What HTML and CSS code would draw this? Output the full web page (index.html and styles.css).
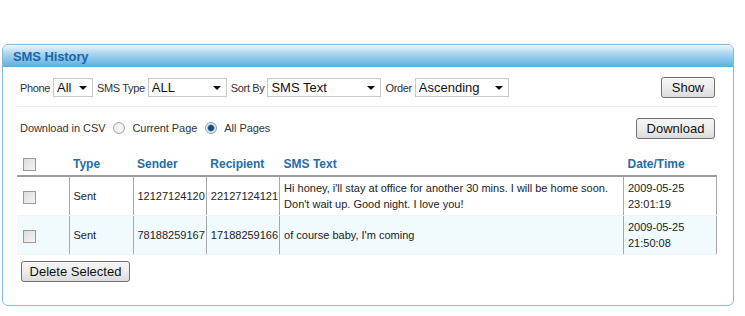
FILE: index.html
```html
<!DOCTYPE html>
<html lang="en">
<head>
<meta charset="utf-8">
<title>SMS History</title>
<link rel="stylesheet" href="styles.css">
</head>
<body>
<div class="panel">
  <div class="panel-head">SMS History</div>
  <div class="panel-body">
    <form class="filters">
      <label class="lbl">Phone</label>
      <span class="sel sel-phone"><select><option>All</option></select></span>
      <label class="lbl">SMS Type</label>
      <span class="sel sel-type"><select><option>ALL</option></select></span>
      <label class="lbl">Sort By</label>
      <span class="sel sel-sort"><select><option>SMS Text</option></select></span>
      <label class="lbl">Order</label>
      <span class="sel sel-order"><select><option>Ascending</option></select></span>
      <button type="button" class="btn btn-push">Show</button>
    </form>
    <div class="csv">
      <span class="lbl">Download in CSV</span>
      <span class="radio"></span>
      <span class="lbl">Current Page</span>
      <span class="radio on"></span>
      <span class="lbl">All Pages</span>
      <button type="button" class="btn btn-push">Download</button>
    </div>
    <table class="grid">
      <thead>
        <tr>
          <th class="c-cb"><span class="cb"></span></th>
          <th class="c-type">Type</th>
          <th class="c-num">Sender</th>
          <th class="c-num">Recipient</th>
          <th class="c-text">SMS Text</th>
          <th class="c-date">Date/Time</th>
        </tr>
      </thead>
      <tbody>
        <tr>
          <td class="c-cb"><span class="cb"></span></td>
          <td>Sent</td>
          <td>12127124120</td>
          <td>22127124121</td>
          <td>Hi honey, i'll stay at office for another 30 mins. I will be home soon. Don't wait up. Good night. I love you!</td>
          <td>2009-05-25<br>23:01:19</td>
        </tr>
        <tr class="alt">
          <td class="c-cb"><span class="cb"></span></td>
          <td>Sent</td>
          <td>78188259167</td>
          <td>17188259166</td>
          <td>of course baby, I'm coming</td>
          <td>2009-05-25<br>21:50:08</td>
        </tr>
      </tbody>
    </table>
    <button type="button" class="btn btn-delete">Delete Selected</button>
  </div>
</div>
</body>
</html>
```

FILE: styles.css
```css
* {
  box-sizing: border-box;
}
body {
  margin: 0;
  background: #fff;
  font-family: "Liberation Sans", Arial, sans-serif;
  font-size: 11px;
  color: #222;
}
.panel {
  margin: 44px 0 0 2px;
  width: 732px;
  height: 262px;
  border: 1px solid #86b9d8;
  border-radius: 6px;
  overflow: hidden;
}
.panel-head {
  height: 22px;
  padding: 4px 0 0 10px;
  background: linear-gradient(to bottom, #eef6fc 0%, #a9d4ef 40%, #5aaee0 100%);
  font-size: 13px;
  font-weight: bold;
  color: #1b67a8;
  letter-spacing: -0.1px;
}
.panel-body {
  padding: 0 15px 0 14px;
}
.filters {
  display: flex;
  align-items: center;
  height: 40px;
  padding: 2px 0 0 3px;
  margin: 0;
  border-bottom: 1px solid #ececec;
}
.lbl {
  color: #333;
  margin-right: 3px;
  letter-spacing: -0.35px;
}
.sel {
  position: relative;
  display: inline-block;
  height: 19px;
  margin-right: 4px;
}
.sel select {
  appearance: none;
  -webkit-appearance: none;
  width: 100%;
  height: 19px;
  padding: 0 0 0 3px;
  border: 1px solid #c9c9c9;
  background: #fff;
  font-family: "Liberation Sans", Arial, sans-serif;
  font-size: 13px;
  color: #111;
}
.sel::after {
  content: "";
  position: absolute;
  right: 6px;
  top: 8px;
  border-left: 4px solid transparent;
  border-right: 4px solid transparent;
  border-top: 4px solid #111;
  pointer-events: none;
}
.sel-phone { width: 40px; }
.sel-type { width: 79px; }
.sel-sort { width: 114px; }
.sel-order { width: 94px; }
.btn {
  height: 21px;
  padding: 0 6px;
  border: 1px solid #707070;
  border-radius: 3px;
  background: linear-gradient(to bottom, #f6f6f6 0%, #ececec 50%, #dcdcdc 100%);
  font-family: "Liberation Sans", Arial, sans-serif;
  font-size: 13px;
  color: #111;
  white-space: nowrap;
}
.btn-push {
  margin-left: auto;
  margin-right: 3px;
}
.filters .btn { width: 54px; }
.csv {
  display: flex;
  align-items: center;
  height: 44px;
  padding: 0 0 2px 3px;
}
.csv .btn { width: 79px; }
.csv .lbl {
  margin-right: 8px;
  letter-spacing: -0.05px;
}
.radio {
  display: inline-block;
  width: 12px;
  height: 12px;
  margin-right: 7px;
  border-radius: 50%;
  border: 1px solid #9aa4ab;
  background: radial-gradient(circle, #fdfdfd 0%, #e3e6e8 100%);
}
.radio.on {
  background: radial-gradient(circle, #1a4d75 0 2.5px, #4a8fc0 3px, #e7eef3 4px, #dfe3e6 100%);
}
.grid {
  width: 700px;
  border-collapse: collapse;
  margin: 0 0 6px 0;
}
.grid th {
  height: 25px;
  padding: 1px 0 0 4px;
  text-align: left;
  font-size: 12px;
  font-weight: bold;
  color: #1f6ea6;
  vertical-align: middle;
  border-bottom: 2px solid #9c9c9c;
}
.grid td {
  height: 39px;
  padding: 1px 1px 0 4px;
  border: 1px solid #a8a8a8;
  border-top: none;
  border-bottom: 1px solid #eef4f6;
  line-height: 16px;
  color: #222;
  vertical-align: middle;
}
.grid td:first-child {
  border-left: none;
}
.grid tr.alt td {
  background: #f1fafd;
}
.grid .c-cb {
  width: 52px;
  padding-left: 6px;
}
.c-type { width: 64px; }
.c-num { width: 73px; }
.c-date { width: 93px; }
.cb {
  display: inline-block;
  width: 13px;
  height: 13px;
  vertical-align: middle;
  border: 1px solid #9a9a9a;
  background: linear-gradient(135deg, #dcdcdc 0%, #f4f4f4 100%);
}
.btn-delete {
  margin-left: 4px;
  width: 109px;
  height: 21px;
}
```
